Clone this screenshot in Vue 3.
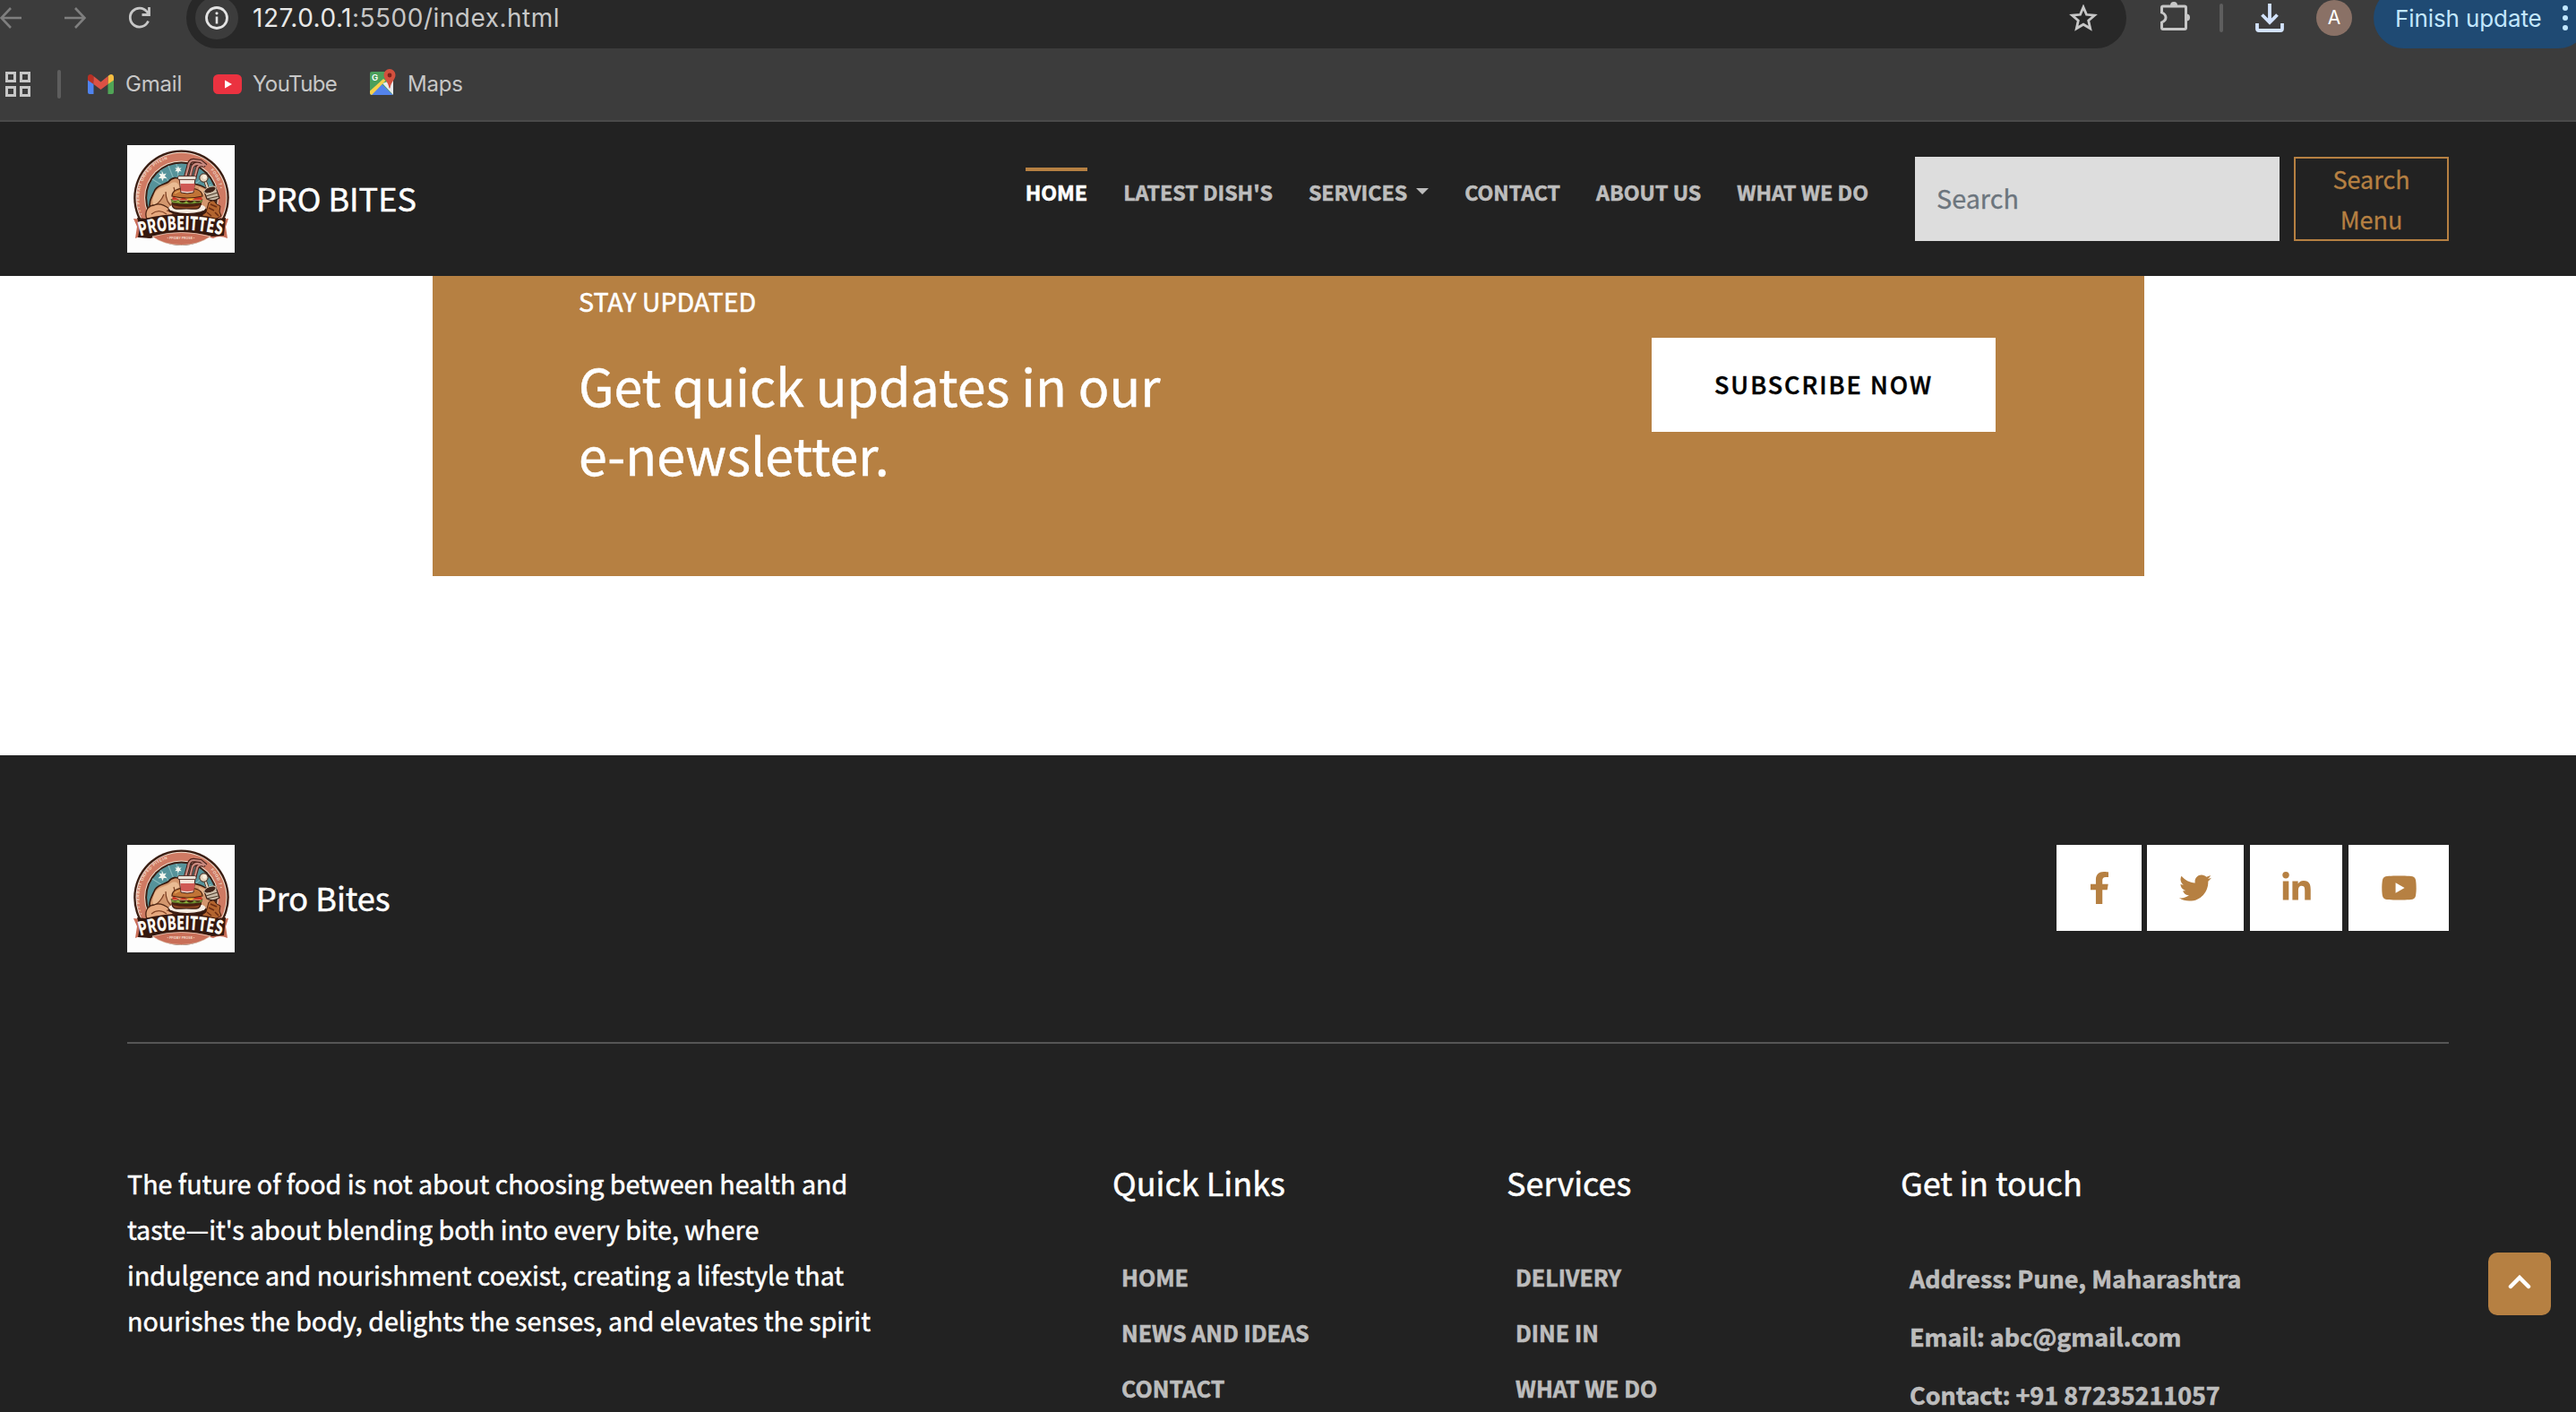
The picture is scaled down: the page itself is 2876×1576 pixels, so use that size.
<script setup>
const nav = [
  { label: 'HOME', active: true },
  { label: "LATEST DISH'S" },
  { label: 'SERVICES', caret: true },
  { label: 'CONTACT' },
  { label: 'ABOUT US' },
  { label: 'WHAT WE DO' },
]
const quickLinks = ['HOME', 'NEWS AND IDEAS', 'CONTACT']
const services = ['DELIVERY', 'DINE IN', 'WHAT WE DO']
const contact = ['Address: Pune, Maharashtra', 'Email: abc@gmail.com', 'Contact: +91 87235211057']
const story = [
  'The future of food is not about choosing between health and',
  "taste—it's about blending both into every bite, where",
  'indulgence and nourishment coexist, creating a lifestyle that',
  'nourishes the body, delights the senses, and elevates the spirit',
]
</script>

<template>
  <div class="page">
    <svg class="defs" aria-hidden="true">
      <symbol id="logo" viewBox="0 0 120 120">
        <rect width="120" height="120" fill="#fdfdfd" />
        <circle cx="60.5" cy="58.8" r="53.3" fill="#3a1d12" />
        <circle cx="60.5" cy="58.8" r="51" fill="#f0dccb" />
        <circle cx="60.5" cy="58.8" r="50" fill="#cf7a63" />
        <circle cx="60.5" cy="58.8" r="41.4" fill="#f0dccb" />
        <circle cx="60.5" cy="58.8" r="40.4" fill="#3a1d12" />
        <circle cx="60.5" cy="58.8" r="38.4" fill="#56939a" />
        <path d="M60 58L28 38M60 58L37 28M60 58L46 23M60 58L55 21M60 58L75 24M60 58L88 33M60 58L94 44" stroke="#86b8bb" stroke-width="1.2" />
        <path d="M39 29l1.400 3.400 3.400-.8-2 3 2.500 2.300-3.600.1-1.200 3.300-1.300-3.300-3.600.2 2.600-2.600-1.900-3 3.300.7zM57 23l1 2.700 2.700-.5-1.700 2.100 1.700 2-2.700-.3-1 2.600-1-2.600-2.700.3 1.700-2-1.700-2.100 2.700.5z" fill="#f4f6ee" />
        <path id="ring-a" d="M17.200 77A45.500 45.500 0 0 1 70 14.800" fill="none" />
        <path id="ring-b" d="M84 20A45 45 0 0 1 103 70" fill="none" />
        <text class="ring"><textPath href="#ring-a">• • • PERBAIT ORPED·PITEIN</textPath></text>
        <text class="ring"><textPath href="#ring-b" startOffset="12">FOOD 7 •</textPath></text>
        <path d="M23 86L99 86L100 74L92 58L72 52L38 57L24 70z" fill="#2e150c" />
        <path d="M26 71C23 64 28 57 31 50C35 44 42 44 46 41C50 36 56 35 59 39L78 44C89 47 97 54 98 64L93 72L45 78L30 76z" fill="#d3966d" stroke="#36190d" stroke-width="1.600" />
        <path d="M31 53C36 46 43 47 48 43C53 40 58 42 58 47C54 51 55 57 50 64C46 66 42 61 43 53C40 58 36 64 30 68C27 64 29 58 31 53z" fill="#eabb93" />
        <path d="M80 47C88 49 94 55 96 62C90 58 86 55 81 54z" fill="#e6b48b" />
        <path d="M43 52C43 60 46 66 51 69M30 68C35 65 39 60 41 55M52 47C54 52 53 57 51 61" fill="none" stroke="#7c3f23" stroke-width="1.200" />
        <path d="M21 79C20 72 25 67 30 67C36 64 43 68 47 71L54 74C49 76 52 80 46 81L36 84C27 85 21 84 21 79z" fill="#e6a87e" stroke="#4d2412" stroke-width="1.300" />
        <path d="M27 77C33 72 39 73 44 77M44 73L51 75M42 80L48 79" fill="none" stroke="#854527" stroke-width="1.200" />
        <path d="M91 64l5-3 4 5 4 2-1 6 2 5-7 4-6 3-9-2 1-6 4-3z" fill="#b3652f" stroke="#4a200f" />
        <path d="M91 70l6 3M93 66l7 3M89 75l5 4M98 75l4 4M86 81l6 1" stroke="#6c2d13" stroke-width="1.600" />
        <ellipse cx="67" cy="72" rx="21.500" ry="6.500" fill="#3a1d12" />
        <ellipse cx="67" cy="70.300" rx="20.500" ry="5.600" fill="#f7ece1" />
        <path d="M50 65H82C82 73 76 71 66 71C56 71 50 73 50 65z" fill="#8d4722" stroke="#3a1d12" stroke-width="1.200" />
        <path d="M50 62H83V67Q66 71 50 67z" fill="#4c2110" />
        <path d="M49 60Q53 65 57 61Q61 67 66 62Q70 67 75 62Q80 66 84 60L83 64Q66 67 50 64z" fill="#8fae3c" stroke="#33491a" stroke-width=".6" />
        <path d="M51 57l7 4 5-3 6 4 8-5 6 1 1 3H50z" fill="#c93a26" />
        <path d="M63 58h14l-6 4z" fill="#f2b136" />
        <path d="M50 57C50 51 56 48 66.500 48S84 51 84 57Q67 61 50 57z" fill="#c07336" stroke="#4b210f" stroke-width="1.200" />
        <path d="M53 54Q58 50 67 50" stroke="#e0a05c" stroke-width="1.600" fill="none" />
        <path d="M65 36L68 25Q69 17 74 17L82 18L88 23M70 36L73 24Q75 20 80 21L86 23M75 37L78 26Q79 22 84 22" stroke="#4b2119" stroke-width="4.400" fill="none" />
        <path d="M65 36L68 25Q69 17 74 17L82 18L88 23M70 36L73 24Q75 20 80 21L86 23M75 37L78 26Q79 22 84 22" stroke="#c98a80" stroke-width="2.200" fill="none" />
        <path d="M58 37H76L74 53Q67 55 60 53z" fill="#f3e3d8" stroke="#4b2119" stroke-width="1" />
        <path d="M59.500 43H75.500L74.500 51Q67 53 60 51z" fill="#cf5a55" />
        <rect x="56.500" y="34.500" width="20.500" height="4" rx="1.500" fill="#e8e0d6" stroke="#4b2119" stroke-width=".8" />
        <path d="M87 40L91 51" stroke="#4b2b1b" stroke-width="3.600" />
        <path d="M87 40L91 51" stroke="#e9dbc6" stroke-width="2" />
        <circle cx="85.500" cy="36.500" r="4.700" fill="#e5d3bd" stroke="#3a1d12" stroke-width="1" />
        <circle cx="86.500" cy="35.500" r="2.400" fill="#faf0e0" />
        <path d="M86 52L99 47L103 59Q96 64 89 60z" fill="#c9bba8" stroke="#3a1d12" stroke-width="1.200" />
        <path d="M88 57L101 53M89 60L102 57" stroke="#54402f" stroke-width="1.200" />
        <ellipse cx="92.500" cy="50" rx="7" ry="3.300" transform="rotate(-20 92.500 50)" fill="#40251a" stroke="#dccbb4" />
        <path d="M7 82L19 83Q60 71 101 83L113 82L110 91L112 104Q103 100 96 104Q60 93 24 104Q17 100 9 104L11 91z" fill="#c96f58" />
        <path d="M11 81L20 82Q60 72 101 82L110 81L108 101L95 102Q60 92 26 104L12 103L14 92z" fill="#35180e" />
        <path d="M28 102Q60 93 93 102Q79 111.500 60.500 111.500Q41 111.500 28 102z" fill="#c96f58" stroke="#f0dccb" stroke-width=".7" />
        <path id="arc" d="M14.500 101.500Q60 88 108 101" fill="none" />
        <text class="mark"><textPath href="#arc" textLength="92" lengthAdjust="spacingAndGlyphs">PROBEITTES</textPath></text>
        <text class="tiny" x="60" y="104.500" text-anchor="middle">• PFIDBY PROSE •</text>
      </symbol>
    </svg>

    <div class="toolbar">
      <svg class="back" width="24" height="24" viewBox="0 0 24 24"><path d="M24 12H2M12 1L1.500 12L12 23" /></svg>
      <svg class="fwd" width="24" height="24" viewBox="0 0 24 24"><path d="M0 12H22M12 1L22.500 12L12 23" /></svg>
      <svg class="reload" width="26" height="26" viewBox="0 0 26 26"><path d="M22.500 16.500A10.500 10.500 0 1 1 21 6L23.500 8.500M23.500 1V9.500H15.500" /></svg>
      <div class="omnibox">
        <span class="site">
          <svg width="26" height="26" viewBox="0 0 26 26"><circle cx="13" cy="13" r="11.500" fill="none" stroke="#e3e3e3" stroke-width="2.800" /><path d="M13 11.500V19.500" stroke="#e3e3e3" stroke-width="2.600" /><circle cx="13" cy="7.800" r="1.600" fill="#e3e3e3" /></svg>
        </span>
        <span class="url"><b>127.0.0.1</b>:5500/index.html</span>
        <svg class="star" width="32" height="30" viewBox="0 0 32 30"><path d="M16 3L19.500 11.300L28.500 12.100L21.700 18L23.700 26.800L16 22.200L8.300 26.800L10.300 18L3.500 12.100L12.500 11.300z" /></svg>
      </div>
      <svg class="puzzle" width="34" height="34" viewBox="0 0 34 34"><path d="M4 6H28Q29.500 6 29.500 7.500V30Q29.500 31.500 28 31.500H4Q2.500 31.500 2.500 30V24Q7 22 7 18.500T2.500 13V7.500Q2.500 6 4 6z" fill="none" stroke="#c7c7c7" stroke-width="3" /><path d="M12 5a4 4 0 0 1 8 0zM30 14.500a4 4 0 0 1 0 8z" fill="#c7c7c7" /></svg>
      <i class="sep s1"></i>
      <svg class="dl" width="32" height="32" viewBox="0 0 32 32"><path d="M16 0V21M7.500 12.500L16 21L24.500 12.500M2 22V28Q2 30 4 30H28Q30 30 30 28V22" /></svg>
      <span class="avatar">A</span>
      <div class="update">
        <span>Finish update</span>
        <svg width="6" height="30" viewBox="0 0 6 30"><g fill="#c2e7ff"><circle cx="3" cy="4" r="3" /><circle cx="3" cy="15" r="3" /><circle cx="3" cy="26" r="3" /></g></svg>
      </div>
    </div>

    <div class="bookmarks">
      <svg class="apps" width="28" height="28" viewBox="0 0 28 28"><path d="M1.500 1.500h9v9h-9zM17.500 1.500h9v9h-9zM1.500 17.500h9v9h-9zM17.500 17.500h9v9h-9z" /></svg>
      <i class="sep s2"></i>
      <svg class="gm" width="29" height="22" viewBox="0 0 29 22">
        <path d="M0 3V20Q0 22 2 22H6.500V8z" fill="#4f83ee" /><path d="M29 3V20Q29 22 27 22H22.500V8z" fill="#50a556" />
        <path d="M0 3.500Q0 0 3 0Q4.500 0 6.500 2V11L0 6.500z" fill="#b93024" /><path d="M29 3.500Q29 0 26 0Q24.500 0 22.500 2V11L29 6.500z" fill="#f5bd41" />
        <path d="M6.500 2L14.500 8.500L22.500 2V11L14.500 17L6.500 11z" fill="#dd5144" />
      </svg>
      <span class="bm">Gmail</span>
      <svg class="yt" width="32" height="22" viewBox="0 0 32 22"><rect width="32" height="22" rx="5.500" fill="#eb3240" /><path d="M13 6.500L21 11L13 15.500z" fill="#fff" /></svg>
      <span class="bm tube">YouTube</span>
      <svg class="mp" width="29" height="29" viewBox="0 0 29 29">
        <path d="M2 3H26V27Q26 29 24 29H2Q0 29 0 27V5Q0 3 2 3z" fill="#4b9f5b" />
        <path d="M26 12V29L14 16z" fill="#e8eaed" /><path d="M1 28.500L13.500 17L25.500 29H2z" fill="#5383ec" />
        <path d="M0 24.500L15 11L17.500 13L2 29Q0 28.500 0 27z" fill="#f7d04b" />
        <path d="M22 0a6.500 6.500 0 0 1 6.500 6.500C28.500 12 23.500 14 22.500 21.500H21.500C20.500 14 15.500 12 15.500 6.500A6.500 6.500 0 0 1 22 0z" fill="#d4503e" /><circle cx="22" cy="7" r="2.400" fill="#7b211a" />
        <text x="2" y="12.500" fill="#fff" font-family="Inter, sans-serif" font-size="9.500" font-weight="600">G</text>
      </svg>
      <span class="bm">Maps</span>
    </div>

    <header class="header">
      <svg class="logo" width="120" height="120"><use href="#logo" /></svg>
      <span class="brand">PRO BITES</span>
      <nav class="nav">
        <a v-for="n in nav" :key="n.label" class="link" :class="{ active: n.active }">{{ n.label }}<i v-if="n.caret" class="caret"></i></a>
      </nav>
      <div class="search">Search</div>
      <button class="menu">Search<br />Menu</button>
    </header>

    <section class="banner">
      <div class="copy">
        <p class="eyebrow">STAY UPDATED</p>
        <h2>Get quick updates in our<br />e-newsletter.</h2>
      </div>
      <button class="subscribe">SUBSCRIBE NOW</button>
    </section>

    <footer class="footer">
      <div class="top">
        <svg class="logo" width="120" height="120"><use href="#logo" /></svg>
        <span class="brand">Pro Bites</span>
        <div class="social">
          <a class="fb"><svg width="20" height="36" viewBox="22.900 0 274.200 512" preserveAspectRatio="none"><path d="M279.140 288l14.220-92.660h-88.910v-60.130c0-25.350 12.420-50.060 52.240-50.060h40.420V6.260S260.430 0 225.360 0c-73.220 0-121.080 44.380-121.080 124.720v70.620H22.890V288h81.390v224h100.170V288z" /></svg></a>
          <a class="tw"><svg width="36" height="36" viewBox="0 0 512 512"><path d="M459.370 151.716c.325 4.548.325 9.097.325 13.645 0 138.720-105.583 298.558-298.558 298.558-59.452 0-114.680-17.219-161.137-47.106 8.447.974 16.568 1.299 25.340 1.299 49.055 0 94.213-16.568 130.274-44.832-46.132-.975-84.792-31.188-98.112-72.772 6.498.974 12.995 1.624 19.818 1.624 9.421 0 18.843-1.300 27.614-3.573-48.081-9.747-84.143-51.980-84.143-102.985v-1.299c13.969 7.797 30.214 12.670 47.431 13.319-28.264-18.843-46.781-51.005-46.781-87.391 0-19.492 5.197-37.360 14.294-52.954 51.655 63.675 129.300 105.258 216.365 109.807-1.624-7.797-2.599-15.918-2.599-24.040 0-57.828 46.782-104.934 104.934-104.934 30.213 0 57.502 12.670 76.670 33.137 23.715-4.548 46.456-13.320 66.599-25.340-7.798 24.366-24.366 44.833-46.132 57.827 21.117-2.273 41.584-8.122 60.426-16.243-14.292 20.791-32.161 39.308-52.628 54.253z" /></svg></a>
          <a class="li"><svg width="32" height="36" viewBox="0 0 448 512"><path d="M100.280 448H7.400V148.900h92.880zM53.790 108.100C24.090 108.100 0 83.500 0 53.800a53.790 53.790 0 0 1 107.580 0c0 29.700-24.100 54.300-53.790 54.300zM447.900 448h-92.680V302.400c0-34.700-.7-79.200-48.290-79.200-48.290 0-55.690 37.700-55.690 76.700V448h-92.780V148.900h89.080v40.800h1.300c12.400-23.500 42.690-48.300 87.880-48.300 94 0 111.280 61.900 111.280 142.300V448z" /></svg></a>
          <a class="yb"><svg width="41" height="36" viewBox="0 0 576 512"><path d="M549.655 124.083c-6.281-23.650-24.787-42.276-48.284-48.597C458.781 64 288 64 288 64S117.220 64 74.629 75.486c-23.497 6.322-42.003 24.947-48.284 48.597-11.412 42.867-11.412 132.305-11.412 132.305s0 89.438 11.412 132.305c6.281 23.650 24.787 41.500 48.284 47.821C117.220 448 288 448 288 448s170.780 0 213.371-11.486c23.497-6.321 42.003-24.171 48.284-47.821 11.412-42.867 11.412-132.305 11.412-132.305s0-89.438-11.412-132.305zm-317.510 213.508V175.185l142.739 81.205-142.739 81.201z" /></svg></a>
        </div>
      </div>
      <div class="cols">
        <p class="story"><template v-for="(s, i) in story" :key="i">{{ s }}<br /></template></p>
        <div class="col">
          <h3>Quick Links</h3>
          <a v-for="q in quickLinks" :key="q">{{ q }}</a>
        </div>
        <div class="col">
          <h3>Services</h3>
          <a v-for="s in services" :key="s">{{ s }}</a>
        </div>
        <div class="col touch">
          <h3>Get in touch</h3>
          <a v-for="c in contact" :key="c">{{ c }}</a>
        </div>
      </div>
    </footer>

    <button class="totop"><svg width="26" height="16" viewBox="0 0 26 16"><path d="M3 13L13 3L23 13" /></svg></button>
  </div>
</template>

<style>
body { margin: 0; background: #fff; }
</style>
<style scoped>
.page { position: relative; width: 2876px; height: 1576px; overflow: hidden; display: flex; flex-direction: column; background: #fff; font-family: "Noto Sans CJK SC", sans-serif; }
.page * { box-sizing: border-box; }
.defs { position: absolute; width: 0; height: 0; }
svg { display: block; flex: none; }
button { border: 0; padding: 0; font-family: inherit; }
p, h2, h3 { margin: 0; font-weight: 400; }

.ring { font: 700 4.600px "Liberation Sans", sans-serif; fill: #f3dccb; letter-spacing: .5px; }
.mark { font: 900 21px "Noto Sans CJK SC", sans-serif; fill: #fdf9f2; }
.tiny { font: 700 3.500px "Liberation Sans", sans-serif; fill: #f3dccb; }

.toolbar { flex: none; display: flex; align-items: center; height: 68px; margin-top: -14px; background: #3c3c3c; font-family: Inter, sans-serif; }
.back path, .fwd path { fill: none; stroke: #7f7f7f; stroke-width: 2.600; }
.fwd { margin-left: 48px; }
.reload { margin-left: 47px; }
.reload path { fill: none; stroke: #c7c7c7; stroke-width: 2.800; }
.omnibox { flex: none; display: flex; align-items: center; width: 2166px; height: 68px; margin-left: 39px; padding: 0 32px 0 10px; border-radius: 34px; background: #282828; }
.site { display: flex; align-items: center; justify-content: center; width: 48px; height: 48px; border-radius: 50%; background: #3c3c3c; }
.url { flex: 1; margin-left: 16px; color: #c7c7c7; font-size: 28px; letter-spacing: .5px; line-height: 40px; white-space: nowrap; }
.url b { color: #e8e8e8; font-weight: 400; }
.star path { fill: none; stroke: #c7c7c7; stroke-width: 2.800; }
.puzzle { margin: -4px 0 0 37px; }
.sep { flex: none; width: 4px; height: 32px; border-radius: 2px; background: #5e5e5e; }
.s1 { margin-left: 33px; }
.dl { margin-left: 36px; }
.dl path { fill: none; stroke: #d3e3fd; stroke-width: 3.800; }
.avatar { flex: none; width: 40px; height: 40px; margin-left: 36px; border-radius: 50%; background: #8a7166; color: #fff; font-size: 21px; line-height: 40px; text-align: center; }
.update { flex: none; display: flex; align-items: center; justify-content: space-between; width: 240px; height: 68px; margin-left: 24px; padding: 0 23px 0 24px; border-radius: 34px; background: #1f4a73; color: #c2e7ff; font-size: 26px; letter-spacing: -.1px; white-space: nowrap; }

.bookmarks { flex: none; display: flex; align-items: center; height: 82px; padding-left: 6px; border-bottom: 2px solid #4a4a4a; background: #3c3c3c; font-family: Inter, sans-serif; }
.apps path { fill: none; stroke: #c7c7c7; stroke-width: 3; }
.s2 { margin-left: 30px; }
.gm { margin-left: 30px; }
.bm { width: 64px; margin-left: 13px; color: #c7c7c7; font-size: 24px; letter-spacing: -.2px; line-height: 32px; white-space: nowrap; }
.tube { margin-left: 12px; letter-spacing: -.6px; }
.yt { margin-left: 34px; }
.mp { margin: -5px 0 0 67px; }

.header { flex: none; display: flex; align-items: center; height: 172px; padding: 0 142px; background: #222; }
.brand { margin-left: 24px; padding-bottom: 5px; color: #fff; font-size: 36px; line-height: 48px; white-space: nowrap; }
.brand, .eyebrow, .story, h2, h3 { -webkit-text-stroke: .5px currentColor; }
.nav { display: flex; gap: 40px; align-self: flex-start; margin: 51px 52px 0 auto; }
.link { display: flex; align-items: center; height: 45px; padding-top: 5px; border-top: 4px solid transparent; color: #bdbdbd; font-size: 23.200px; font-weight: 700; line-height: 36px; white-space: nowrap; -webkit-text-stroke: .6px currentColor; }
.active { color: #fff; border-color: #b68042; }
.caret { width: 0; margin: -2px 0 0 10px; border: 7px solid transparent; border-top-color: currentColor; border-bottom: 0; }
.search { width: 407px; height: 94px; padding: 0 24px 3px; background: #ddd; color: #6c757d; font-size: 28.800px; line-height: 91px; -webkit-text-stroke: .3px currentColor; }
.menu { width: 173px; height: 94px; margin-left: 16px; padding-bottom: 3px; border: 2px solid #b68042; background: none; color: #b68042; font-size: 27px; line-height: 45px; -webkit-text-stroke: .3px currentColor; }

.banner { flex: none; display: flex; width: 1911px; height: 335px; margin-left: 483px; padding: 4px 166px 0 163px; justify-content: space-between; background: #b68042; color: #fff; }
.eyebrow { font-size: 28.600px; line-height: 48px; }
h2 { margin-top: 31px; font-size: 57.300px; line-height: 77px; }
.subscribe { width: 384px; height: 105px; margin-top: 65px; padding-bottom: 3px; background: #fff; color: #000; font-size: 27px; font-weight: 500; letter-spacing: 2px; -webkit-text-stroke: .5px currentColor; }

.footer { flex: none; height: 733px; margin-top: 200px; padding: 100px 142px 0; background: #222; color: #fff; }
.top { display: flex; align-items: center; height: 222px; padding-bottom: 100px; border-bottom: 2px solid #555; }
.social { display: flex; align-self: flex-start; margin-left: auto; }
.social a { display: flex; justify-content: center; align-items: center; height: 96px; background: #fff; fill: #b68042; }
.fb { width: 95px; }
.tw { width: 108px; margin-left: 6px; }
.li { width: 103px; margin-left: 7px; }
.yb { width: 112px; margin-left: 7px; }
.cols { display: flex; padding-top: 130px; }
.story { width: 1100px; font-size: 28.650px; line-height: 51px; white-space: nowrap; }
.col { display: flex; flex-direction: column; width: 440px; }
h3 { margin-bottom: 51px; font-size: 36px; line-height: 48px; white-space: nowrap; }
.col a { padding-left: 10px; color: #bdbdbd; font-size: 25px; font-weight: 700; line-height: 62px; white-space: nowrap; -webkit-text-stroke: .6px currentColor; }
.col.touch a { font-size: 26.900px; line-height: 65px; }

.totop { position: absolute; left: 2778px; top: 1398px; display: flex; align-items: center; justify-content: center; width: 70px; height: 70px; padding-bottom: 4px; border-radius: 10px; background: #b68042; }
.totop path { fill: none; stroke: #fff; stroke-width: 4.500; stroke-linecap: round; }
</style>
